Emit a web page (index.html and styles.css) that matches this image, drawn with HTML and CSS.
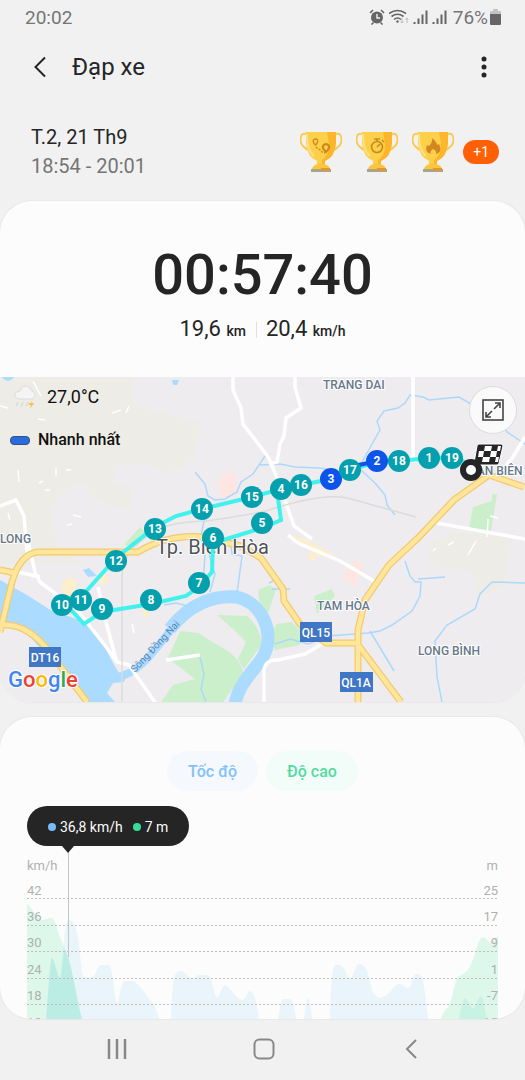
FILE: index.html
```html
<!DOCTYPE html>
<html lang="vi">
<head>
    <meta charset="UTF-8">
    <meta name="viewport" content="width=device-width, initial-scale=1.0">
    <title>Đạp xe</title>
    <link rel="stylesheet" href="styles.css">
</head>
<body>
<div class="status-bar">
    <span>20:02</span>
    <div class="status-icons">
        <svg width="16" height="16" viewBox="0 0 16 16">
            <circle cx="8" cy="8.5" r="6" fill="#666"/>
            <path d="M8 5v4h3" fill="none" stroke="#f2f2f2" stroke-width="1.4"/>
            <path d="M1 4l3-3M15 4l-3-3M2.500 15.500l2-2M13.500 15.500l-2-2" stroke="#666" stroke-width="1.6"/>
        </svg>
        <svg width="20" height="16" viewBox="0 0 20 16" fill="none" stroke="#666" stroke-width="1.6">
            <path d="M0 4.500Q8.500-1.500 17 4.500M2.500 7.500Q8.500 3 14.500 7.500M5 10.500Q8.500 7.500 12 10.500"/>
            <circle cx="8.500" cy="12.500" r="1.2" fill="#666" stroke="none"/>
            <path d="M13 9v5M11.500 12.500l1.500 1.500 1.500-1.500M18 14V9M16.500 10.500L18 9l1.500 1.500" stroke="#bbb" stroke-width="1"/>
        </svg>
        <svg width="15" height="16" viewBox="0 0 15 16" stroke="#666" stroke-width="2">
            <path d="M1.500 13v2M5.500 9.500V15M9.500 5.500V15M13.500 1.500V15"/>
        </svg>
        <svg width="15" height="16" viewBox="0 0 15 16" stroke="#666" stroke-width="2">
            <path d="M1.500 13v2M5.500 9.500V15M9.500 5.500V15M13.500 1.500V15"/>
        </svg>
        <span>76%</span>
        <svg width="11" height="16" viewBox="0 0 11 16">
            <path d="M3 0h5v2h2q1 0 1 1v2H0V3q0-1 1-1h2z" fill="#c4c4c4"/>
            <path d="M0 5h11v10q0 1-1 1H1q-1 0-1-1z" fill="#666"/>
        </svg>
    </div>
</div>

<header class="app-bar">
    <button class="icon-btn" aria-label="Quay lại">
        <svg width="14" height="22" viewBox="0 0 14 22"><path d="M12 1.500L2.500 11l9.500 9.500" fill="none" stroke="#252525" stroke-width="2"/></svg>
    </button>
    <h1>Đạp xe</h1>
    <button class="icon-btn" aria-label="Tùy chọn khác">
        <svg width="6" height="22" viewBox="0 0 6 22" fill="#252525"><circle cx="3" cy="3" r="2.500"/><circle cx="3" cy="11" r="2.500"/><circle cx="3" cy="19" r="2.500"/></svg>
    </button>
</header>

<section class="summary">
    <div>
        <p class="date">T.2, 21 Th9</p>
        <p class="time">18:54 - 20:01</p>
    </div>
    <div class="awards">
        <svg width="0" height="0" class="defs">
            <defs>
                <g id="cup">
                    <path d="M6 3C-1 1-1 12 4 16q3 3 6 4M36 3c7-2 7 9 2 13q-3 3-6 4" fill="none" stroke="#fbc94d" stroke-width="2"/>
                    <path d="M6 1h30v11q-1 14-11 18v5h-8v-5Q7 26 6 12z" fill="#fdd04b"/>
                    <path d="M27 1h9v11q-1 14-11 18v5h-3v-6q7-4 7-16z" fill="#fdb62b"/>
                    <path d="M7 3q0 17 7 22" fill="none" stroke="#fee084" stroke-width="2"/>
                    <path d="M12 38q0-4 9-6 9 2 9 6z" fill="#fcc43d"/>
                    <path d="M11 38h20v3H11z" fill="#a9a48c"/>
                    <path d="M21 37h9v3h-9z" fill="#d89b36"/>
                </g>
            </defs>
        </svg>
        <svg width="42" height="42" viewBox="0 0 42 42">
            <use href="#cup"/>
            <path d="M15.500 14q-3-3-2-5 2-2 4 0 1 2-2 5z" fill="none" stroke="#c98a1d" stroke-width="1.300"/>
            <path d="M26 21q-4-4-3-6 3-4 6 0 1 2-3 6z" fill="none" stroke="#c98a1d" stroke-width="2.200"/>
            <path d="M16 16l2 2 3 1 1 2 3 1" fill="none" stroke="#c98a1d" stroke-width="1.500" stroke-dasharray="2 1.500"/>
        </svg>
        <svg width="42" height="42" viewBox="0 0 42 42">
            <use href="#cup"/>
            <g fill="none" stroke="#c98a1d" stroke-width="1.600"><circle cx="21" cy="16" r="5.500"/><path d="M18 8h6M21 8v3M21 16l3-3M26 9l2 2"/></g>
        </svg>
        <svg width="42" height="42" viewBox="0 0 42 42">
            <use href="#cup"/>
            <path d="M20 7q5 4 5 7l2-1q4 8-3 10 1-3-3-5-4 3-2 5-7-2-4-9l2 1q4-4 3-8z" fill="#d2871f"/>
        </svg>
        <span class="more">+1</span>
    </div>
</section>

<main>
    <section class="card">
        <div class="workout">
            <p class="duration">00:57:40</p>
            <div class="stats">
                <span class="stat">19,6 <small>km</small></span>
                <span class="stat">20,4 <small>km/h</small></span>
            </div>
        </div>

        <div class="map">
            <svg class="map-canvas" viewBox="0 0 525 325">
                <defs>
                    <path id="highways" d="M0 255l12-50q8-28 26-30h100q30-18 65-15l38 9 20 12 22 31 1 12 16 23 26 19h30M0 193l15 3M0 248q28-3 52 30l35 47M524 110l-35-12-35 25-35 37-30 28-24 35-7 30v72M356 265l45 60" fill="none"/>
                </defs>
                <rect width="525" height="325" fill="#efecef"/>
                <!-- land -->
                <path d="M0 0h130l5 30 65 15-5 35-28 18-15-10h-38v18l20 5-5 22-35-10-10-18-15 5-18 20 5 35 25 22H0z" fill="#eeece6"/>
                <path d="M430 168l20-12 62 2-7 50-28 14-5-28-42-5z" fill="#eeece6"/>
                <path d="M2 0h12q-6 8-12 0zM172 3h7l-2 5h-4zM83 193l6-2 8 8-9 1z" fill="#abdbff"/>
                <path d="M217 105l13-12 6 6 2 15-16 8zM344 196l10-13 10 5-9 22-12-8z" fill="#fde5e1"/>
                <path d="M61 208l8-8 8 5-4 13 8 4-3 8-13-5zM142 228l6-2v12l-4 4zM288 158l12 2 30 15 4 7-18-4-3 6-5-2 3-8zM96 200l8-5 5 7-7 7z" fill="#feefcc"/>
                <g fill="#cbeecb">
                    <path d="M473 130l19-6v-7h5l-6 37-22-2z"/>
                    <path d="M124 168l16-18 8 8-12 12z"/>
                    <path d="M180 254l18 2 23 14q22 12 22 28l-20 27h-62l12-17 22-6-27-21z"/>
                    <path d="M217 238l30 1q14 12 15 29l-8 10-10 14-6-10 8-17-13-13z"/>
                    <path d="M258 213l12-5 6 5-9 26-7-7zM269 258l8-11 15-2 8 8v15l-25 5zM314 219l18-7 3 7-18 18z"/>
                </g>
                <!-- river -->
                <path d="M0 203l27 15 25 16 34 11 15 18 12 23 7 12 8-4-4 11-11 1-6 10 8 9H88l-19-22-20-22-26-29-23-6z" fill="#abdbff"/>
                <path d="M116 300C140 298 158 268 178 244" fill="none" stroke="#abdbff" stroke-width="8"/>
                <path d="M170 252C190 226 215 218 237 220 262 226 276 256 263 280 252 296 238 308 235 327" fill="none" stroke="#abdbff" stroke-width="13"/>
                <!-- streams -->
                <g fill="none" stroke="#abd8fb" stroke-width="1.500">
                    <path d="M195 95l10 12 3 12 7 4 10-1 12-7 4-10 12-8 12-18M260 88l20-1 15 3 25 1 20 4 22-10 18-32-3-9 7-10 14-3 7-5 5-8 13 2 6 3 30-3 12 7 8-2 13 8 15 22 15 10 13 10-4 10M361 93l14 13 10 12 2 10 8 10"/>
                    <path d="M405 184l5 15 5 6h6l-1 14-8 15-20 14-12 6-12 2-40 3-20 8-18-5-15 5M418 202l27-2M370 254l12 20 12 20"/>
                    <path d="M442 325l-5-25-2-36 12-16 28-16 5-15 12-12 33 1M205 139l-4 20 4 20-2 27M203 157l12 40-5 18M230 162l2 15 10 2-5 37M200 280l4 17-3 15 5 13M188 229l-12-3-12 2M269 206l8-4 9 12M272 212h18"/>
                </g>
                <!-- roads -->
                <g fill="none" stroke="#fff" stroke-width="3.500">
                    <path d="M233 0v13l8 18 2 16 26 34 8 20 17 48 18 13M295 0v10l6 21-15 10-2 18-4 8-3 18-8 2M413 0v85M0 129l16-6 8 16 3 36M27 160l8 35 5 10 37 28 30 38 10 14 12 3 28 40M18 195l22 5M98 210l8 35 11 41M288 158l10 8 42 18 34 20M431 145l94 17M525 60l-12 20-15 18M264 325v-33q2-10 14-9l27-6 22-13M166 283l34-5"/>
                </g>
                <g fill="none" stroke="#fff" stroke-width="1.500">
                    <path d="M33 4l8 15M112 36l9-3M126 36l3-7M38 42l7 1M18 93l1 12M56 91v8M66 93h5M39 106l4-2M45 113h5M8 136l2 7M73 138l8 2M67 148l5-1M0 29l8 2M132 247l2 9M468 178l8-14M433 174l3-3M448 168l6-3M490 139l8 2M487 160l1-18"/>
                </g>
                <path d="M122 325v-126q1-24 24-39 15-15 60-16 35-5 60-10 60-20 85-12l65 18" fill="none" stroke="#dadcdb" stroke-width="1.500"/>
                <use href="#highways" stroke="#f4c96f" stroke-width="7"/>
                <use href="#highways" stroke="#fee69b" stroke-width="4.500"/>
                <!-- place names -->
                <g class="place">
                    <text x="323" y="12">TRANG DAI</text>
                    <text x="0" y="166">LONG</text>
                    <text x="470" y="98">TÂN BIÊN</text>
                    <text x="317" y="233">TAM HÒA</text>
                    <text x="418" y="278">LONG BÌNH</text>
                </g>
                <text class="city" x="156" y="177">Tp. Biên Hòa</text>
                <text class="river-name" transform="translate(135 296) rotate(-47)">Sông Đồng Nai</text>
                <g fill="#3f76c6">
                    <rect x="29" y="270" width="32" height="20"/>
                    <rect x="300" y="245" width="32" height="20"/>
                    <rect x="340" y="295" width="33" height="20"/>
                </g>
                <g class="shield">
                    <text x="45" y="285">DT16</text>
                    <text x="316" y="260">QL15</text>
                    <text x="356" y="310">QL1A</text>
                </g>
                <!-- route -->
                <path d="M471 90l-12-9h-30l-30 3-22 1-27 8-19 9-30 6-20 4-29 8-50 12-26 7-21 11-39 31-35 39-20 2 23 25 18-12 49-8 35-8 13-9 13-15 1-29 49-15 19-8-4-29" fill="none" stroke="#42f0ec" stroke-width="4"/>
                <path d="M377 84l-27 6" stroke="#0d55ea" stroke-width="4"/>
                <g class="pins">
                    <circle cx="62" cy="228" r="11"/><circle cx="81" cy="223" r="11"/><circle cx="102" cy="232" r="11"/>
                    <circle cx="151" cy="223" r="11"/><circle cx="199" cy="206" r="11"/><circle cx="213" cy="161" r="11"/>
                    <circle cx="262" cy="146" r="11"/><circle cx="281" cy="112" r="11"/><circle cx="301" cy="108" r="11"/>
                    <circle class="fast" cx="331" cy="102" r="11"/><circle cx="350" cy="93" r="11"/><circle class="fast" cx="377" cy="84" r="11"/>
                    <circle cx="399" cy="84" r="11"/><circle cx="429" cy="81" r="11"/><circle cx="452" cy="81" r="11"/>
                    <circle cx="252" cy="120" r="11"/><circle cx="202" cy="132" r="11"/><circle cx="155" cy="152" r="11"/><circle cx="116" cy="184" r="11"/>
                </g>
                <g class="pin-labels">
                    <text x="62" y="232">10</text><text x="81" y="227">11</text><text x="102" y="236">9</text>
                    <text x="151" y="227">8</text><text x="199" y="210">7</text><text x="213" y="165">6</text>
                    <text x="262" y="150">5</text><text x="281" y="116">4</text><text x="301" y="112">16</text>
                    <text x="331" y="106">3</text><text x="350" y="97">17</text><text x="377" y="88">2</text>
                    <text x="399" y="88">18</text><text x="429" y="85">1</text><text x="452" y="85">19</text>
                    <text x="252" y="124">15</text><text x="202" y="136">14</text><text x="155" y="156">13</text><text x="116" y="188">12</text>
                </g>
                <!-- finish flag and start point -->
                <path d="M479 67h22q2 0 2 2l-4 17q0 2-2 2h-22q-2 0-1-2l3-17q0-2 2-2z" fill="#252525" stroke="#fff"/>
                <path d="M485 69h7l-1 5h-7zM498 69h3l-1 5h-3zM479 74h5l-1 6h-5zM491 74h6l-1 6h-6zM483 80h7l-1 5h-7zM496 80h3l-1 5h-3z" fill="#fff"/>
                <circle cx="471" cy="93" r="8" fill="#fff" stroke="#252525" stroke-width="6"/>
                <text class="google" x="8" y="310"><tspan fill="#4285f4">G</tspan><tspan fill="#ea4335">o</tspan><tspan fill="#fbbc05">o</tspan><tspan fill="#4285f4">g</tspan><tspan fill="#34a853">l</tspan><tspan fill="#ea4335">e</tspan></text>
            </svg>

            <div class="legend">
                <p class="weather">
                    <svg width="22" height="24" viewBox="0 0 22 24">
                        <path d="M5 14q-5-1-4-5 1-3 5-3 1-5 6-5 5 1 6 5 4 2 3 5-1 3-4 3z" fill="#f4f4f5" stroke="#dcdcde"/>
                        <path d="M4 17l-2 4M9 17l-2 5M14 17l-2 4" stroke="#dadada" stroke-width="1.500"/>
                        <path d="M19 15l-5 5h3l-1 4 4-6h-3z" fill="#f3c43c"/>
                    </svg>
                    27,0°C
                </p>
                <p class="fastest">Nhanh nhất</p>
            </div>
            <button class="expand" aria-label="Phóng to bản đồ">
                <svg width="22" height="22" viewBox="0 0 22 22" fill="none" stroke="#454545" stroke-width="1.600">
                    <rect x="1" y="1" width="20" height="20"/>
                    <path d="M12 10l6-6M13 4h5v5M10 12l-6 6M4 13v5h5"/>
                </svg>
            </button>
        </div>
    </section>

    <section class="card chart-card">
        <div class="tabs">
            <button class="tab speed">Tốc độ</button>
            <button class="tab altitude">Độ cao</button>
        </div>
        <div class="tooltip">
            <span class="value">36,8 km/h</span>
            <span class="value alt">7 m</span>
        </div>
        <svg class="chart" viewBox="0 0 471 200">
            <!-- altitude -->
            <path d="M0 54C6 58 10 70 15 70S23 67 25 68C29 70 31 84 35 92L41 107C46 121 50 150 55 169L61 200H0z" fill="#ddf8ea"/>
            <path d="M405 200C411 172 417 160 421 157 426 150 428 127 432 126S438 122 441 120C447 112 450 92 454 88S460 92 464 92 469 88 471 85V200z" fill="#ddf8ea"/>
            <!-- speed -->
            <g fill="#73c8fa" fill-opacity="0.130">
                <path d="M17 200C20 160 23 108 25 108S31 128 33 128 37 70 41 70 47 72 50 82 54 127 57 127 61 128 65 127 70 115 74 115H82C86 115 88 153 90 153S94 131 98 131H106C110 131 120 146 125 152S134 172 138 200z"/>
                <path d="M142 200C144 170 145 130 148 125S152 121 155 121 161 128 165 128 169 125 173 125H181C185 125 187 147 190 147S195 135 198 135 211 150 215 150 220 141 223 141C230 141 233 176 235 200z"/>
                <path d="M247 200C252 160 254 149 256 149H263C268 149 269 176 274 200zM272 200C277 175 279 148 281 148S286 175 290 200z"/>
                <path d="M302 200C303 168 304 127 306 120S309 115 312 115C319 115 319 128 323 128S328 114 332 114C344 114 342 140 348 145S352 147 355 147C362 147 367 134 372 134S377 138 381 138 385 124 389 124 395 126 396 130 401 165 405 200z"/>
            </g>
            <g fill="#28c6b6" fill-opacity="0.110">
                <path d="M17 200C20 160 23 108 25 108S31 128 33 128 35 105 38 99L41 107C46 121 50 150 55 169L61 200z"/>
                <path d="M427 200C433 160 436 148 438 148S443 158 446 158 451 146 454 146 458 160 464 200z"/>
            </g>
            <g stroke="#bdbdbd" stroke-dasharray="2 2">
                <path d="M0 48.500h471M0 75.500h471M0 101.500h471M0 128.500h471M0 154.500h471M0 181.500h471"/>
            </g>
            <path d="M41.500 0v107" stroke="#c4c4c4"/>
            <g class="axis">
                <text x="0" y="20">km/h</text>
                <text x="0" y="45">42</text>
                <text x="0" y="71">36</text>
                <text x="0" y="97">30</text>
                <text x="0" y="124">24</text>
                <text x="0" y="150">18</text>
                <text x="0" y="177">12</text>
            </g>
            <g class="axis right">
                <text x="471" y="20">m</text>
                <text x="471" y="45">25</text>
                <text x="471" y="71">17</text>
                <text x="471" y="97">9</text>
                <text x="471" y="124">1</text>
                <text x="471" y="150">-7</text>
                <text x="471" y="177">-15</text>
            </g>
        </svg>
    </section>
</main>

<nav class="nav-bar">
    <button aria-label="Gần đây"><svg width="20" height="20" viewBox="0 0 20 20" stroke="#888" stroke-width="2.500"><path d="M2 0v20M10 0v20M18 0v20"/></svg></button>
    <button aria-label="Trang chủ"><svg width="22" height="22" viewBox="0 0 22 22"><rect x="1.500" y="1.500" width="19" height="19" rx="5" fill="none" stroke="#888" stroke-width="2"/></svg></button>
    <button aria-label="Quay lại"><svg width="12" height="20" viewBox="0 0 12 20"><path d="M11 1L2 10l9 9" fill="none" stroke="#888" stroke-width="2"/></svg></button>
</nav>
</body>
</html>
```
FILE: styles.css
```css
* {
    margin: 0;
    padding: 0;
    box-sizing: border-box;
    font-family: Roboto, "Noto Sans", sans-serif;
}

body {
    display: flex;
    flex-direction: column;
    height: 100vh;
    background: #f1f1f1;
    color: #252525;
    overflow: hidden;
}

button {
    border: none;
    background: transparent;
    cursor: pointer;
}

svg {
    display: block;
    flex-shrink: 0;
}

.status-bar {
    display: flex;
    justify-content: space-between;
    align-items: center;
    height: 34px;
    padding: 0 24px 0 25px;
    font-size: 19px;
    color: #757575;
}

.status-icons {
    display: flex;
    align-items: center;
    gap: 4px;
}

.status-icons span {
    margin-left: 2px;
}

.status-icons span + svg {
    margin-left: -2px;
}

.app-bar {
    display: flex;
    align-items: center;
    height: 66px;
    padding: 0 25px 0 24px;
}

.icon-btn {
    display: flex;
    justify-content: center;
    align-items: center;
    width: 32px;
    height: 40px;
}

.app-bar h1 {
    flex: 1;
    margin-left: 16px;
    font-size: 24px;
    font-weight: 400;
}

.summary {
    display: flex;
    justify-content: space-between;
    align-items: center;
    height: 101px;
    padding: 3px 26px 0 31px;
    font-size: 20px;
    line-height: 29px;
}

.time {
    color: #757575;
}

.awards {
    display: flex;
    align-items: center;
    gap: 14px;
}

.defs {
    position: absolute;
}

.more {
    margin-left: -5px;
    padding: 0 10px;
    border-radius: 12px;
    background: #ff5f05;
    color: #fff;
    font-size: 14px;
    line-height: 24px;
}

main {
    display: flex;
    flex-direction: column;
    gap: 15px;
    flex: 1;
    min-height: 0;
}

.card {
    flex-shrink: 0;
    border-radius: 32px;
    background: #fcfcfc;
    box-shadow: 0 0 1px 1px #e8e8e8;
    overflow: hidden;
}

.workout {
    display: flex;
    flex-direction: column;
    align-items: center;
    height: 176px;
    padding-top: 44px;
}

.duration {
    font-size: 56px;
    font-weight: 500;
    line-height: 60px;
}

.stats {
    display: flex;
    align-items: center;
    margin-top: 10px;
    line-height: 28px;
}

.stat {
    font-size: 22px;
}

.stat small {
    font-size: 14px;
    font-weight: 500;
}

.stat + .stat {
    margin-left: 10px;
    padding-left: 10px;
    background: linear-gradient(#e0e0e0, #e0e0e0) left center / 1px 16px no-repeat;
}

.map {
    position: relative;
}

.map-canvas {
    width: 100%;
}

.place {
    font-size: 12px;
    font-weight: 500;
    fill: #66788a;
    stroke: #fff;
    stroke-width: 2px;
    paint-order: stroke;
}

.city {
    font-size: 20px;
    fill: #4f5358;
    stroke: #fff;
    stroke-width: 2px;
    paint-order: stroke;
}

.river-name {
    font-size: 10px;
    fill: #5c88b5;
}

.shield {
    font-size: 12px;
    font-weight: 500;
    fill: #fff;
    text-anchor: middle;
}

.pins {
    fill: #05a0ae;
}

.pins .fast {
    fill: #0d55ea;
}

.pin-labels {
    font-size: 12px;
    font-weight: 700;
    fill: #fff;
    text-anchor: middle;
}

.google {
    font-size: 22px;
    font-weight: 500;
    stroke: #fff;
    stroke-width: 2px;
    paint-order: stroke;
}

.legend {
    position: absolute;
    top: 6px;
    left: 10px;
    color: #111;
}

.weather {
    display: flex;
    align-items: center;
    gap: 11px;
    padding-left: 4px;
    font-size: 18px;
    line-height: 28px;
}

.fastest {
    display: flex;
    align-items: center;
    gap: 8px;
    margin-top: 15px;
    font-size: 16px;
    font-weight: 500;
    line-height: 28px;
}

.fastest::before {
    content: "";
    width: 18px;
    height: 7px;
    border: 1px solid #36537e;
    border-radius: 4px;
    background: #2a6be0;
}

.expand {
    position: absolute;
    top: 9px;
    right: 8px;
    display: flex;
    justify-content: center;
    align-items: center;
    width: 48px;
    height: 48px;
    border: 1px solid #dcdcdc;
    border-radius: 50%;
    background: #fafafa;
}

.chart-card {
    flex: 1 1 0;
    min-height: 0;
    padding: 34px 27px 0;
}

.tabs {
    display: flex;
    justify-content: center;
    gap: 8px;
}

.tab {
    height: 40px;
    padding: 0 21px;
    border-radius: 20px;
    font-size: 16px;
    font-weight: 500;
}

.speed {
    background: #f5f9fd;
    color: #82c2fa;
}

.altitude {
    background: #f2fdf9;
    color: #52dba0;
}

.tooltip {
    position: relative;
    display: flex;
    align-items: center;
    gap: 10px;
    width: fit-content;
    height: 40px;
    margin-top: 15px;
    padding: 2px 21px 0;
    border-radius: 20px;
    background: #252525;
    color: #fafafa;
    font-size: 14px;
}

.tooltip::after {
    content: "";
    position: absolute;
    top: 100%;
    left: 35px;
    border: 6px solid transparent;
    border-top: 7px solid #252525;
    border-bottom: none;
}

.value {
    display: flex;
    align-items: center;
    gap: 4px;
}

.value::before {
    content: "";
    width: 8px;
    height: 8px;
    border-radius: 50%;
    background: #75bdfa;
}

.alt::before {
    background: #36df98;
}

.chart {
    width: 100%;
    margin-top: 4px;
}

.axis {
    font-size: 13px;
    fill: #b0b0b0;
}

.right {
    text-anchor: end;
}

.nav-bar {
    display: flex;
    justify-content: center;
    gap: 107px;
    height: 61px;
    padding: 0 0 2px 3px;
}

.nav-bar button {
    display: flex;
    justify-content: center;
    align-items: center;
    width: 40px;
}
```
